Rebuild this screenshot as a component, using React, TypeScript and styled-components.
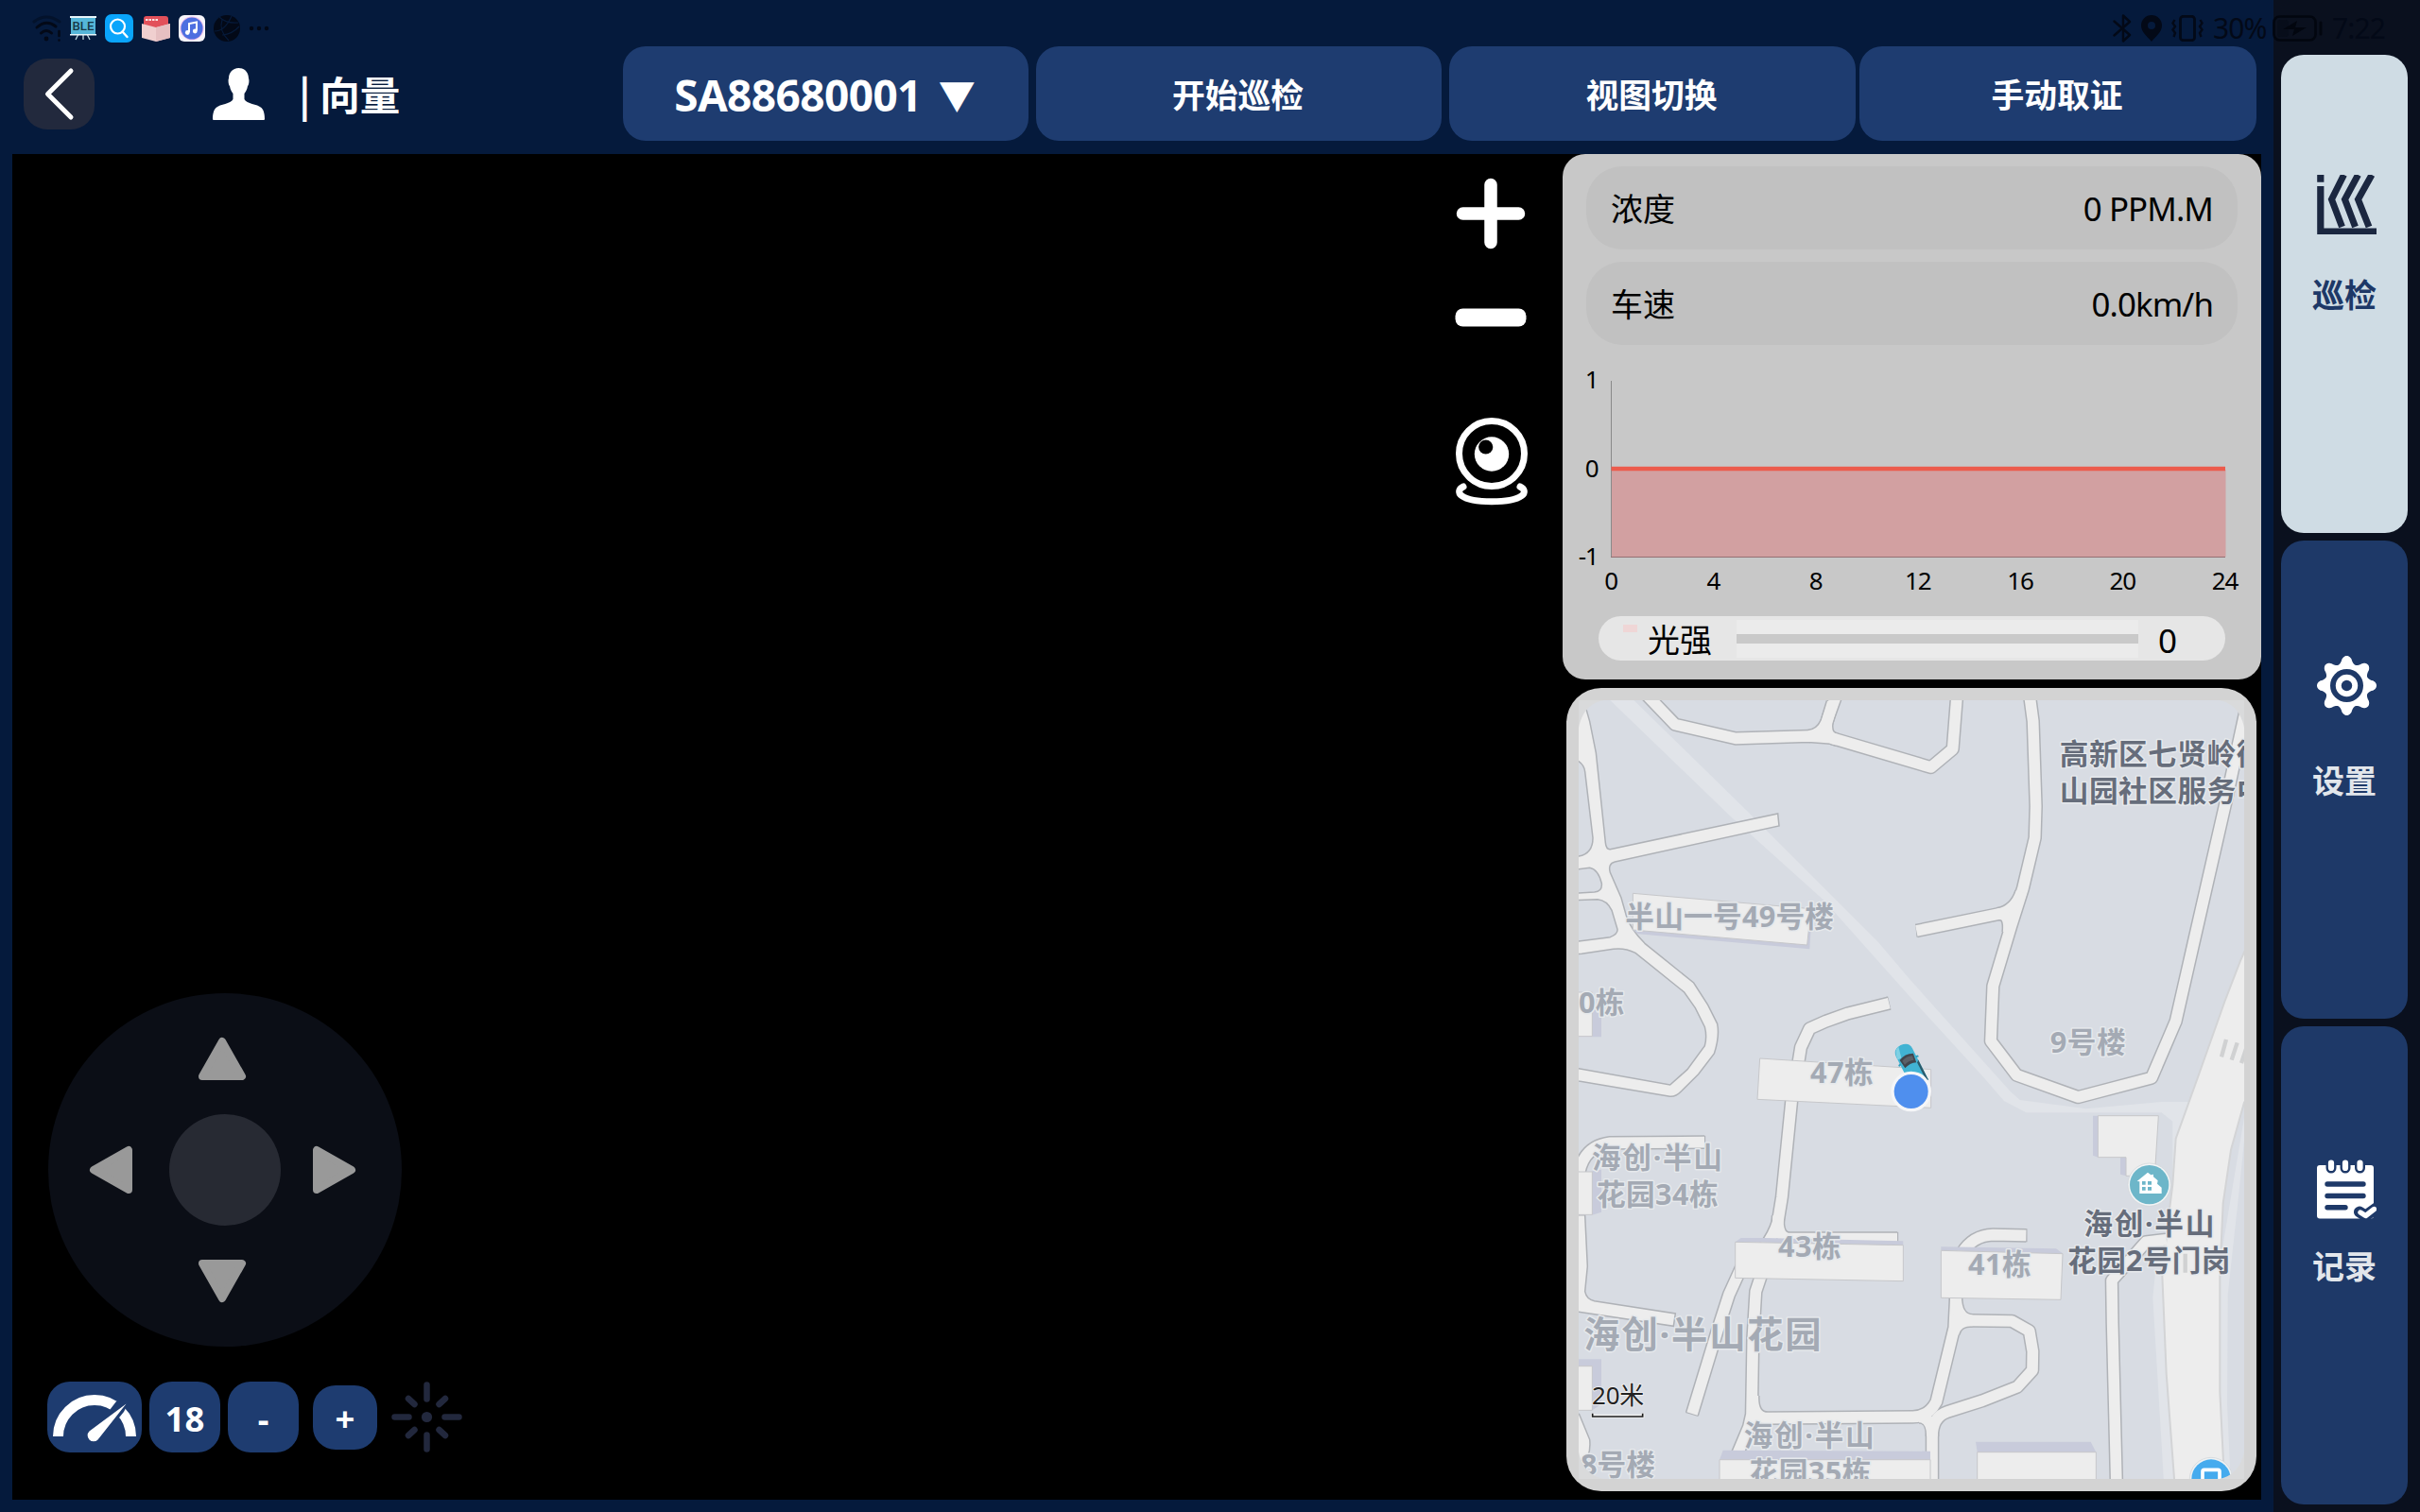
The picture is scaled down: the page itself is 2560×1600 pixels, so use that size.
import React from 'react';
import styled, { createGlobalStyle } from 'styled-components';

const sans = `"Noto Sans", "Noto Sans CJK SC", sans-serif`;
const cjk = `"Noto Sans CJK SC", "Noto Sans", sans-serif`;

const GlobalStyle = createGlobalStyle`
  * { box-sizing: border-box; }
  body { margin: 0; background: #051a3c; font-family: ${sans}; overflow: hidden; }
  button { font: inherit; border: 0; padding: 0; margin: 0; }
  svg { display: block; flex: none; }
`;

/* ---------- shell ---------- */

const Screen = styled.div`
  position: relative;
  display: flex;
  width: 2560px;
  height: 1600px;
  background: #051a3c;
`;

const Main = styled.main`
  display: flex;
  flex-direction: column;
  width: 2405px;
  padding: 0 13px 13px;
`;

const Header = styled.header`
  display: flex;
  align-items: center;
  height: 163px;
  padding: 49px 5px 14px 12px;
`;

const BackButton = styled.button`
  display: grid;
  place-items: center;
  width: 75px;
  height: 75px;
  border-radius: 25px;
  background: #22293d;
`;

const User = styled.div`
  display: flex;
  align-items: center;
  gap: 36px;
  margin-left: 125px;
  color: #fff;
`;

const UserName = styled.span`
  font: 700 42.5px/60px ${cjk};
  white-space: pre;
`;

const Actions = styled.nav`
  display: flex;
  margin-left: auto;
`;

const ActionButton = styled.button<{ $w: number; $gap?: number }>`
  display: flex;
  align-items: center;
  justify-content: center;
  width: ${(p) => p.$w}px;
  height: 100px;
  margin-left: ${(p) => p.$gap ?? 0}px;
  padding: 0 2px 1px 0;
  border-radius: 24px;
  background: #1e3c70;
  color: #fff;
  font: 700 34.8px/50px ${cjk};
`;

const DeviceId = styled.span`
  padding-top: 2px;
  font: 700 46px/60px ${sans};
  letter-spacing: -0.6px;
`;

const Caret = styled.span`
  margin-left: 18px;
  font: 400 39px/60px ${cjk};
`;

/* ---------- status bar ---------- */

const StatusBar = styled.div`
  position: absolute;
  top: 0;
  left: 0;
  display: flex;
  align-items: center;
  justify-content: space-between;
  width: 2560px;
  height: 60px;
  padding: 0 36px 0 34px;
  color: #030917;
`;

const StatusGroup = styled.div<{ $gap: number }>`
  display: flex;
  align-items: center;
  gap: ${(p) => p.$gap}px;
`;

const StatusText = styled.span<{ $w: number }>`
  width: ${(p) => p.$w}px;
  font: 400 30px/40px ${sans};
  letter-spacing: -0.9px;
  white-space: nowrap;
`;

/* ---------- workspace ---------- */

const Workspace = styled.section`
  display: flex;
  flex: 1;
  background: #000;
`;

const Video = styled.div`
  display: flex;
  flex: 1;
  justify-content: space-between;
`;

const DriveControls = styled.div`
  display: flex;
  flex-direction: column;
  justify-content: flex-end;
  padding: 0 0 50px 37px;
`;

const DriveRow = styled.div`
  display: flex;
  align-items: center;
  height: 75px;
  margin-top: 37px;
`;

const DriveButton = styled.button<{ $w?: number; $h?: number; $ml?: number }>`
  display: grid;
  place-items: center;
  width: ${(p) => p.$w ?? 75}px;
  height: ${(p) => p.$h ?? 75}px;
  margin-left: ${(p) => p.$ml ?? 0}px;
  padding-top: 2px;
  border-radius: 24px;
  background: #1e3c70;
  color: #fff;
  font: 700 36.5px/50px ${sans};
`;

const LightButton = styled.button`
  width: 75px;
  height: 75px;
  margin-left: 15px;
  background: transparent;
`;

const CameraControls = styled.div`
  display: flex;
  flex-direction: column;
  align-items: center;
  width: 150px;
  padding-top: 25px;
`;

const CameraButton = styled.button<{ $mt?: number }>`
  display: grid;
  place-items: center;
  width: 78px;
  margin-top: ${(p) => p.$mt ?? 0}px;
  background: transparent;
`;

const Panels = styled.aside`
  display: flex;
  flex-direction: column;
  width: 739px;
`;

const DataPanel = styled.div`
  display: flex;
  flex-direction: column;
  height: 556px;
  padding: 13px 25px 20px;
  border-radius: 24px;
  background: #c8c8c8;
`;

const Reading = styled.div`
  display: flex;
  align-items: center;
  justify-content: space-between;
  height: 88px;
  margin-bottom: 13px;
  padding: 0 26px 0 26px;
  border-radius: 38px;
  background: #c1c1c1;
  color: #000;
  font: 400 34px/50px ${cjk};
`;

const ReadingValue = styled.span`
  padding-top: 1px;
  font: 400 34.8px/50px ${sans};
  letter-spacing: -0.9px;
`;

const ChartBox = styled.div`
  height: 274px;
  margin: 0 -25px;
`;

const ChartText = styled.text`
  font: 400 26px ${sans};
  letter-spacing: -1.2px;
  fill: #000;
`;

const LightRow = styled.div`
  display: flex;
  align-items: center;
  width: 663px;
  height: 47px;
  margin-left: 13px;
  padding-left: 26px;
  border-radius: 23.5px;
  background: #e6e6e6;
  color: #000;
  font: 400 34px/47px ${cjk};
`;

const Swatch = styled.i`
  align-self: flex-start;
  width: 15px;
  height: 8px;
  margin: 9px 11px 0 0;
  background: #efd6d6;
`;

const Track = styled.div`
  display: flex;
  align-items: center;
  width: 425px;
  height: 40px;
  margin: 0 21px 0 26px;
  background: #ebebeb;

  &::before {
    content: '';
    width: 100%;
    height: 10px;
    background: #c9c9c9;
  }
`;

const LightValue = styled.span`
  padding-top: 3px;
  font: 400 35px/47px ${sans};
`;

const MapPanel = styled.div`
  width: 730px;
  height: 850px;
  margin: 9px 0 0 4px;
  padding: 13px;
  border-radius: 37px;
  background: #d3d3d3;
`;

/* ---------- side navigation ---------- */

const Side = styled.nav`
  display: flex;
  flex-direction: column;
  gap: 8px;
  width: 155px;
  padding: 58px 13px 8px 8px;
  background: #0a101e;
`;

const SideItem = styled.button<{ $active?: boolean }>`
  display: flex;
  flex-direction: column;
  align-items: center;
  justify-content: flex-start;
  height: 506px;
  border-radius: 24px;
  background: ${(p) => (p.$active ? '#cfdce4' : '#1e3968')};
  color: ${(p) => (p.$active ? '#1d3867' : '#e2e6eb')};
`;

const SideIcon = styled.span<{ $top: number }>`
  height: 228px;
  padding: ${(p) => p.$top}px 0 0 5px;
`;

const SideLabel = styled.span`
  font: 700 34px/50px ${cjk};
`;

/* ---------- icons ---------- */

const ink = '#030917';

const WifiIcon = () => (
  <svg width="31" height="28" viewBox="0 0 31 28" fill="none" stroke={ink} strokeLinecap="round" strokeWidth="3">
    <path d="M2 7Q15 -3 29 7" opacity=".45" />
    <path d="M5 13Q15 4 25 12" />
    <path d="M9.500 19Q15 14 20.500 19" />
    <circle cx="15" cy="25" r="2.400" fill={ink} stroke="none" />
    <path d="M28.500 17V22M28.500 26.500V26.600" strokeWidth="2.600" />
  </svg>
);

const BleBoard = styled.text`
  font: 500 12.5px Roboto, ${sans};
  fill: #173846;
`;

const BoardIcon = () => (
  <svg width="28" height="28" viewBox="0 0 28 28">
    <path d="M9 20L6 26M14 20V26M18 20L21 26" stroke="#bfd9e2" strokeWidth="1.300" />
    <rect x="1" y="1" width="26" height="20" fill="#55b6d8" />
    <path d="M0 1H28V3H0ZM0 20H28V21.500H0Z" fill="#e8f5fa" />
    <BleBoard x="2.500" y="15.500" textLength="23" lengthAdjust="spacingAndGlyphs">BLE</BleBoard>
  </svg>
);

const SearchAppIcon = () => (
  <svg width="30" height="30" viewBox="0 0 30 30" fill="none">
    <rect width="30" height="30" rx="7" fill="#0aa5fb" />
    <circle cx="13.500" cy="13" r="7.500" stroke="#fff" strokeWidth="2.200" />
    <path d="M18.500 18.500L23.500 24" stroke="#fff" strokeWidth="2.400" strokeLinecap="round" />
  </svg>
);

const ParcelIcon = () => (
  <svg width="30" height="27" viewBox="0 0 30 27">
    <path d="M2 3Q2 0 5 0H25Q28 0 28 3V12H2Z" fill="#e2505a" />
    <path d="M0 8L15 12L30 8V23L15 27L0 23Z" fill="#f0cfcf" />
    <path d="M15 12L30 8V23L15 27Z" fill="#e6bfc1" />
    <path d="M4 4H17" stroke="#fbe3e3" strokeWidth="2" strokeDasharray="2.500 1" />
  </svg>
);

const MusicIcon = () => (
  <svg width="28" height="28" viewBox="0 0 28 28">
    <rect width="28" height="28" rx="6" fill="#f7f5fb" />
    <circle cx="14" cy="14" r="12.500" fill="#e9b9ea" />
    <circle cx="14" cy="14" r="11.500" fill="#4d6fe0" />
    <path d="M11 18V9L19 7.500V16.500" fill="none" stroke="#fff" strokeWidth="2" />
    <circle cx="9.300" cy="18.500" r="2.400" fill="#fff" />
    <circle cx="17.300" cy="17" r="2.400" fill="#fff" />
  </svg>
);

const BallIcon = () => (
  <svg width="28" height="28" viewBox="0 0 28 28">
    <circle cx="14" cy="14" r="14" fill={ink} />
    <path d="M6 2Q13 9 26 8M9 5Q5 16 16 27M1 17Q12 17 19 1M9 21Q20 20 27 12" fill="none" stroke="#061a3a" strokeWidth="1.200" />
  </svg>
);

const DotsIcon = () => (
  <svg width="22" height="6" viewBox="0 0 22 6" fill={ink}>
    <circle cx="3" cy="3" r="2.200" />
    <circle cx="11" cy="3" r="2.200" />
    <circle cx="19" cy="3" r="2.200" />
  </svg>
);

const BluetoothIcon = () => (
  <svg width="20" height="30" viewBox="0 0 20 30" fill="none" stroke={ink} strokeWidth="2.400" strokeLinejoin="round" strokeLinecap="round">
    <path d="M1.500 7.500L18 22L11 28.500V1.500L18 8L1.500 22.500" />
  </svg>
);

const PinIcon = () => (
  <svg width="22" height="28" viewBox="0 0 22 28">
    <path fillRule="evenodd" d="M11 0A11 11 0 0 1 22 11C22 18 15 23 11 28C7 23 0 18 0 11A11 11 0 0 1 11 0ZM11 7A4 4 0 1 0 11 15A4 4 0 1 0 11 7Z" fill={ink} />
  </svg>
);

const VibrateIcon = () => (
  <svg width="34" height="28" viewBox="0 0 34 28" fill="none" stroke={ink} strokeWidth="2.800">
    <rect x="9.500" y="1.300" width="15" height="25.400" rx="3" />
    <path d="M3.500 5L1.500 8.500L4 12L1.500 15.500L4 19L2.500 23M30.500 5L32.500 8.500L30 12L32.500 15.500L30 19L31.500 23" strokeWidth="2.400" />
  </svg>
);

const BatteryIcon = () => (
  <svg width="53" height="28" viewBox="0 0 53 28" fill="none" stroke="#02060f">
    <rect x="1.500" y="1.500" width="44" height="25" rx="6" strokeWidth="2.600" />
    <rect x="5" y="5" width="12" height="18" rx="3" fill="#070d1a" stroke="none" />
    <path d="M26 6L11 15H23L21 22L36 13H24Z" fill="#02060f" stroke="none" />
    <path d="M51 8V20" strokeWidth="3" strokeLinecap="round" />
  </svg>
);

const BackIcon = () => (
  <svg width="75" height="75" viewBox="0 0 75 75" fill="none" stroke="#fff" strokeWidth="5" strokeLinecap="round" strokeLinejoin="round">
    <path d="M50 13L25.500 37.500L50 62" />
  </svg>
);

const PersonIcon = () => (
  <svg width="55" height="55" viewBox="0 0 55 55" fill="#fff">
    <path d="M27.500 0C34 0 38 5 38 11C38.800 12 38.500 18 37 19C36.500 23 34.500 25.500 33.500 27V33C36 38 47 38 51.500 42C54.500 45 55 50 55 54Q55 55 54 55H1Q0 55 0 54C0 50 .5 45 3.500 42C8 38 19 38 21.500 33V27C20.500 25.500 18.500 23 18 19C16.500 18 16.200 12 17 11C17 5 21 0 27.500 0Z" />
  </svg>
);

const Joystick = () => (
  <svg width="375" height="374" viewBox="50 1051 375 374">
    <circle cx="238" cy="1238" r="187" fill="#0b0e16" />
    <circle cx="238" cy="1238" r="59" fill="#272a33" />
    <g fill="#999" stroke="#999" strokeWidth="8" strokeLinejoin="round">
      <path d="M235 1102L256 1139H214Z" />
      <path d="M235 1374L256 1337H214Z" />
      <path d="M99 1238L136 1217V1259Z" />
      <path d="M372 1238L335 1217V1259Z" />
    </g>
  </svg>
);

const GaugeIcon = () => (
  <svg width="88" height="52" viewBox="56 1473 88 52">
    <path d="M61.500 1518A38.500 38.500 0 0 1 138.500 1518" fill="none" stroke="#fff" strokeWidth="11" />
    <path d="M96 1516L123 1481L137 1480L131 1492L105 1524Z" fill="#1e3c70" />
    <path d="M94.500 1512.500L133.500 1483.500L103.500 1521.500A6.300 6.300 0 1 1 94.500 1512.500Z" fill="#fff" />
  </svg>
);

const LampIcon = () => (
  <svg width="75" height="75" viewBox="0 0 75 75" fill="none" stroke="#22283d" strokeWidth="6.500" strokeLinecap="round">
    <circle cx="37.500" cy="37.500" r="5.600" fill="#22283d" stroke="none" />
    <path d="M37.500 3.500V18.500M37.500 56.500V71.500M3.500 37.500H18.500M56.500 37.500H71.500M18 18L24.500 24M57 18L50.500 24M18 57L24.500 51M57 57L50.500 51" />
  </svg>
);

const PlusIcon = () => (
  <svg width="78" height="76" viewBox="0 0 78 76" stroke="#fff" strokeWidth="13.500" strokeLinecap="round">
    <path d="M38 7.500V68.500M8.500 38H67.500" />
  </svg>
);

const MinusIcon = () => (
  <svg width="78" height="20" viewBox="0 0 78 20">
    <rect x=".5" y=".5" width="75" height="19" rx="8" fill="#fff" />
  </svg>
);

const WebcamIcon = () => (
  <svg width="78" height="94" viewBox="1539 441 78 94" fill="none" stroke="#fff">
    <circle cx="1578" cy="480" r="34.500" strokeWidth="7" />
    <circle cx="1578" cy="480.500" r="18.200" fill="#fff" stroke="none" />
    <circle cx="1571.700" cy="473" r="7.600" fill="#000" stroke="none" />
    <path d="M1548 515C1538 520 1544 530.800 1578 530.800S1618 520 1608 515" strokeWidth="7" strokeLinecap="round" />
  </svg>
);

const InspectIcon = () => (
  <svg width="63" height="63" viewBox="0 0 63 63" fill="none" stroke="#1b2740" strokeWidth="7">
    <path d="M3.800 0V7.700M3.800 12V60H63" strokeWidth="7.200" />
    <path d="M28.500 0L15.500 26L26.500 55M43.500 0L29.500 26L40.500 55M58 0L43.500 26L55 55" />
  </svg>
);

/* Eight round-tipped teeth: the radius follows a flattened cosine. */
const gearOutline = Array.from({ length: 240 }, (_, i) => {
  const t = (i / 240) * Math.PI * 2;
  const c = Math.cos(8 * t);
  const r = 27.500 + 4 * Math.sign(c) * Math.pow(Math.abs(c), 0.75);
  return `${(31.500 + r * Math.cos(t)).toFixed(2)},${(31.500 + r * Math.sin(t)).toFixed(2)}`;
}).join(' ');

const GearIcon = () => (
  <svg width="63" height="63" viewBox="0 0 63 63" fill="#fff">
    <polygon points={gearOutline} />
    <circle cx="31.500" cy="31.500" r="17.500" fill="#1e3968" />
    <circle cx="31.500" cy="31.500" r="11.700" />
    <circle cx="31.500" cy="31.500" r="5.700" fill="#1e3968" />
  </svg>
);

const RecordIcon = () => (
  <svg width="63" height="63" viewBox="0 0 63 63" fill="none" strokeLinecap="round" strokeLinejoin="round">
    <rect y="6" width="60" height="56.500" rx="3" fill="#fff" />
    <g stroke="#1e3968" strokeWidth="11">
      <path d="M15 4V9M30 4V9M45.500 4V9" />
    </g>
    <g stroke="#fff" strokeWidth="6.200">
      <path d="M15 3.500V9M30 3.500V9M45.500 3.500V9" />
    </g>
    <path d="M11 26H49M11 38.500H49M11 50.800H30" stroke="#1e3968" strokeWidth="5.400" />
    <path d="M45 55.500L51.500 59.500L64 50.500" stroke="#1e3968" strokeWidth="12" />
    <path d="M46 56L51.500 59.500L60.500 52.500" stroke="#fff" strokeWidth="5.400" />
  </svg>
);

/* ---------- chart ---------- */

const hours = [0, 4, 8, 12, 16, 20, 24];
const levels = [
  { v: '1', y: 402 },
  { v: '0', y: 496 },
  { v: '-1', y: 589 },
];

const Chart = () => (
  <svg width="739" height="262" viewBox="1653 378 739 262">
    <rect x="1705" y="497" width="649.500" height="92" fill="#d2a0a1" />
    <path d="M1704.500 403V589.500" stroke="#8a8a8a" />
    <path d="M1704 589.500H2354" stroke="#946f72" strokeWidth="1.200" />
    <path d="M1704.500 496H2354" stroke="#ec5b4c" strokeWidth="4.400" />
    {levels.map((l) => (
      <ChartText key={l.v} x={1690.500} y={l.y + 9} textAnchor="end">{l.v}</ChartText>
    ))}
    {hours.map((h) => (
      <ChartText key={h} x={1704 + (h / 24) * 649.500} y={624} textAnchor="middle">{h}</ChartText>
    ))}
  </svg>
);

/* ---------- map ---------- */

const MapLabel = styled.text<{ $dark?: boolean; $size?: number }>`
  font: 700 ${(p) => p.$size ?? 92}px ${sans};
  fill: ${(p) => (p.$dark ? '#666d7b' : '#a4aab4')};
  stroke: #e6e9ec;
  stroke-width: 9px;
  stroke-linejoin: round;
  paint-order: stroke;
`;

const ScaleText = styled.text`
  font: 400 78px ${sans};
  fill: #222;
  stroke: #f2f2f2;
  stroke-width: 5px;
  paint-order: stroke;
`;

const labels: { t: string; x: number; y: number; w?: number; dark?: boolean; size?: number }[] = [
  { t: '半山一号49号楼', x: 208, y: 783, w: 662 },
  { t: '0栋', x: 60, y: 1055, w: 145 },
  { t: '47栋', x: 795, y: 1278, w: 200 },
  { t: '9号楼', x: 1556, y: 1183, w: 240 },
  { t: '高新区七贤岭街', x: 1586, y: 268, w: 654, dark: true },
  { t: '山园社区服务中', x: 1586, y: 384, w: 654, dark: true },
  { t: '海创·半山', x: 102, y: 1548, w: 414 },
  { t: '花园34栋', x: 117, y: 1665, w: 386 },
  { t: '43栋', x: 693, y: 1829, w: 200 },
  { t: '41栋', x: 1296, y: 1888, w: 200 },
  { t: '海创·半山花园', x: 76, y: 2119, w: 754, size: 115 },
  { t: '8号楼', x: 66, y: 2523, w: 237 },
  { t: '海创·半山', x: 584, y: 2431, w: 414 },
  { t: '花园35栋', x: 602, y: 2548, w: 386 },
  { t: '海创·半山', x: 1663, y: 1758, w: 414, dark: true },
  { t: '花园2号门岗', x: 1612, y: 1875, w: 516, dark: true },
];

const roads = [
  'M270 40L366 140L558 184L790 177L860 182L1178 276L1247 218L1261 40',
  'M880 40L853 115Q838 172 790 177',
  'M866 70L848 130Q840 182 880 188',
  'M1490 40L1502 130L1511 400L1508 500L1470 660L1432 780L1375 970L1368 1145L1450 1253L1645 1323L1878 1262L1955 1082L2010 840L2115 380L2180 80',
  'M1132 795L1390 742Q1445 732 1465 672',
  'M1390 742Q1430 736 1424 800',
  'M1045 1025L915 1057L845 1082L793 1105L765 1165L757 1215',
  'M737 1320L705 1640L692 1720Q680 1760 650 1800',
  'M693 1700Q688 1772 730 1772L1071 1772',
  'M578 1860L537 1950L500 2065L420 2328',
  'M642 1880L622 1940L613 2090L609 2330L600 2370L560 2465',
  'M613 2270Q610 2340 660 2342L1120 2338Q1170 2338 1195 2290L1252 2055L1257 1955',
  'M1140 2338Q1182 2338 1182 2400L1182 2560',
  'M1257 1955Q1258 2031 1310 2032L1435 2034L1490 2065L1501 2130L1500 2190L1452 2243L1340 2287L1230 2322Q1182 2338 1182 2400',
  'M1249 2075Q1256 2032 1310 2032',
  'M1480 1762L1375 1760Q1310 1762 1275 1820',
  'M1925 1775L1860 1783L1752 1905L1754 2040L1767 2560',
  'M459 1466L160 1468Q80 1478 62 1560',
];

const roadAreas = [
  'M40 50L75 60L95 130L115 230L145 515Q147 537 160 536L692 423L696 462L175 576Q152 582 160 610L195 690L212 750Q225 790 270 835L425 960L470 1030L500 1090Q508 1130 490 1185L440 1250L385 1305Q365 1325 345 1320L60 1272L40 1268L40 1228L60 1232L350 1284L405 1235L460 1160Q468 1130 460 1100L430 1040L395 990L240 865Q205 848 170 853L70 868L40 870L40 830L60 828L160 815Q185 805 183 790L165 730Q150 698 120 695L40 698L40 676L110 672Q135 670 133 645Q122 600 95 595L40 602L40 562L60 558Q105 550 105 500L80 290Q78 270 60 257L40 250Z',
  'M40 1697L80 1697L88 1860L80 1940Q85 1965 110 1970L367 2010L361 2050L60 2005L40 2003Z',
  'M40 2316L62 2330L95 2410Q98 2440 90 2460L40 2500Z',
];

const shadows = [
  'M232 792L248 805L793 853L800 735Z',
  'M103 1045L132 1050V1132H103Z',
  'M103 1557L132 1553V1688L103 1697Z',
  'M60 2155H132V2298L103 2317V2177H60Z',
  'M557 1783L575 1770H650L1090 1780V1793Z',
  'M1210 1810V1798L1575 1804L1598 1820Z',
  'M1692 1382H1708V1514L1692 1508Z',
  'M1779 1514H1797V1573L1779 1568Z',
  'M507 2474L518 2444L1176 2447V2474Z',
  'M1325 2450L1320 2417H1685L1702 2450Z',
];

const buildings = [
  'M232 676L797 725L785 840L232 792Z',
  'M50 990H103V1130H50Z',
  'M635 1200L1178 1235V1357L627 1330Z',
  'M50 1560H103V1696H50Z',
  'M50 2177H103V2317H50Z',
  'M557 1783L1090 1793V1907L557 1897Z',
  'M1210 1810L1596 1820L1590 1966L1210 1960Z',
  'M1708 1382H1900L1888 1573H1797V1514H1708Z',
  'M507 2474H1176V2560H507Z',
  'M1325 2450H1702V2560H1325Z',
];

const MapView = () => (
  <svg width="704" height="824" viewBox="60 63 2112 2472">
    <rect x="60" y="63" width="2112" height="2472" fill="#d8dce3" />
    <g fill="#e1e4e9">
      <path d="M160 63H235L600 420L860 680L1010 830L1110 948L1430 1305L1460 1332L1670 1360L1910 1338H2000V1400L1945 1660V1400L1910 1372H1480L1410 1335L1345 1260L1110 1003L840 700L540 430Z" />
      <path d="M1890 1880L1882 1960L1900 2260L1918 2560H1960L1920 1880Z" />
      <path d="M2180 1340V1380L2155 1630L2120 1950L2118 2300L2130 2560H2090V1880Z" />
    </g>
    <g fill="none" stroke="#afb2b7" strokeWidth="44" strokeLinejoin="round">
      {roads.map((d) => <path key={d} d={d} />)}
    </g>
    <g fill="#ededed" stroke="#afb2b7" strokeWidth="4.500">
      {roadAreas.map((d) => <path key={d} d={d} />)}
      <path d="M1038 1004L1048 1046M1132 774L1136 815M1480 1741V1783M459 1445V1487M1071 1751V1793M400 2322L440 2334" strokeWidth="7" />
    </g>
    <path d="M2200 800L2160 890L2110 1020L2025 1260L1955 1455L1945 1600L1935 1680L1912 1890L1925 2200L1952 2560H2110L2095 2260V1880L2105 1660L2130 1490L2172 1340L2200 1300Z" fill="#ededed" stroke="#d3d4d6" strokeWidth="6" />
    <g fill="none" stroke="#ededed" strokeWidth="35" strokeLinejoin="round">
      {roads.map((d) => <path key={d} d={d} />)}
    </g>
    <path d="M2115 1140L2100 1195M2150 1150L2132 1205M2182 1158L2163 1215M1985 1820V1880" stroke="#d0d1d2" strokeWidth="13" />
    <g fill="#c8cbdb">
      {shadows.map((d) => <path key={d} d={d} />)}
    </g>
    <g fill="#ededed" stroke="#c6c7ca" strokeWidth="3">
      {buildings.map((d) => <path key={d} d={d} />)}
    </g>

    {labels.map((l) => (
      <MapLabel key={`${l.t}${l.x}`} x={l.x} y={l.y} textLength={l.w} $dark={l.dark} $size={l.size}>{l.t}</MapLabel>
    ))}

    <circle cx="1871" cy="1601" r="68" fill="#f2f4f5" stroke="#cfd3d6" strokeWidth="2" />
    <circle cx="1871" cy="1601" r="62" fill="#6db6c9" />
    <path d="M1832 1590L1866 1562L1876 1570L1884 1568V1576L1898 1588L1896 1598L1910 1610V1629H1840V1591Z" fill="#fff" />
    <path d="M1848 1590H1859V1601H1848ZM1866 1590H1878V1601H1866ZM1848 1608H1859V1619H1848ZM1866 1608H1878V1619H1866Z" fill="#6db6c9" />

    <circle cx="2067" cy="2535" r="68" fill="#eef1f3" stroke="#cfd3d6" strokeWidth="2" />
    <circle cx="2067" cy="2535" r="62" fill="#45abee" />
    <rect x="2040" y="2506" width="54" height="60" rx="5" fill="none" stroke="#fff" strokeWidth="11" />

    <g transform="translate(1112 1218) rotate(-27)">
      <path d="M-29 -42Q-28 -66 0 -67Q28 -66 29 -42V70H-29Z" fill="#41b3d3" />
      <path d="M-29 -30Q-28 -62 -8 -66L-16 -30Z" fill="#7fd0e4" />
      <path d="M-24 -26Q0 -38 24 -26L20 4Q0 -4 -20 4Z" fill="#41454d" />
      <path d="M-18 -20Q0 -28 18 -20L16 -6Q0 -12 -16 -6Z" fill="#5b6068" />
      <path d="M-35 -14L-27 -16V-10L-35 -8ZM35 -14L27 -16V-10L35 -8Z" fill="#2c9dbd" />
      <path d="M22 6L29 0V70H22Z" fill="#2a5a6a" />
    </g>
    <circle cx="1115" cy="1305" r="64" fill="#f5f6f8" />
    <circle cx="1115" cy="1305" r="54" fill="#4f8fee" />

    <ScaleText x="102" y="2299" textLength="166">20米</ScaleText>
    <path d="M104 2327V2336H263V2327" fill="none" stroke="#f2f2f2" strokeWidth="11" />
    <path d="M104 2327V2337H263V2327" fill="none" stroke="#1c1c1c" strokeWidth="5" />
    <path d="M60 63H140Q75 75 60 150ZM2172 63H2092Q2157 75 2172 150ZM60 2535V2450Q75 2522 140 2535ZM2172 2535V2450Q2157 2522 2092 2535Z" fill="#d9dadb" />
  </svg>
);

/* ---------- page ---------- */

export default function App() {
  return (
    <Screen>
      <GlobalStyle />
      <Main>
        <Header>
          <BackButton><BackIcon /></BackButton>
          <User>
            <PersonIcon />
            <UserName>| 向量</UserName>
          </User>
          <Actions>
            <ActionButton $w={429}>
              <DeviceId>SA88680001</DeviceId>
              <Caret>▼</Caret>
            </ActionButton>
            <ActionButton $w={429} $gap={8}>开始巡检</ActionButton>
            <ActionButton $w={430} $gap={8}>视图切换</ActionButton>
            <ActionButton $w={420} $gap={4}>手动取证</ActionButton>
          </Actions>
        </Header>

        <Workspace>
          <Video>
            <DriveControls>
              <Joystick />
              <DriveRow>
                <DriveButton $w={100}><GaugeIcon /></DriveButton>
                <DriveButton $ml={8}>18</DriveButton>
                <DriveButton $ml={8}>-</DriveButton>
                <DriveButton $ml={15} $w={68} $h={68}>+</DriveButton>
                <LightButton><LampIcon /></LightButton>
              </DriveRow>
            </DriveControls>
            <CameraControls>
              <CameraButton><PlusIcon /></CameraButton>
              <CameraButton $mt={62}><MinusIcon /></CameraButton>
              <CameraButton $mt={95}><WebcamIcon /></CameraButton>
            </CameraControls>
          </Video>

          <Panels>
            <DataPanel>
              <Reading>
                浓度<ReadingValue>0 PPM.M</ReadingValue>
              </Reading>
              <Reading>
                车速<ReadingValue>0.0km/h</ReadingValue>
              </Reading>
              <ChartBox><Chart /></ChartBox>
              <LightRow>
                <Swatch />
                光强
                <Track />
                <LightValue>0</LightValue>
              </LightRow>
            </DataPanel>
            <MapPanel><MapView /></MapPanel>
          </Panels>
        </Workspace>
      </Main>

      <Side>
        <SideItem $active>
          <SideIcon $top={127}><InspectIcon /></SideIcon>
          <SideLabel>巡检</SideLabel>
        </SideItem>
        <SideItem>
          <SideIcon $top={122}><GearIcon /></SideIcon>
          <SideLabel>设置</SideLabel>
        </SideItem>
        <SideItem>
          <SideIcon $top={141}><RecordIcon /></SideIcon>
          <SideLabel>记录</SideLabel>
        </SideItem>
      </Side>

      <StatusBar>
        <StatusGroup $gap={9}>
          <WifiIcon />
          <BoardIcon />
          <SearchAppIcon />
          <ParcelIcon />
          <MusicIcon />
          <BallIcon />
          <DotsIcon />
        </StatusGroup>
        <StatusGroup $gap={10}>
          <BluetoothIcon />
          <PinIcon />
          <VibrateIcon />
          <StatusText $w={53}>30%</StatusText>
          <BatteryIcon />
          <StatusText $w={57}>7:22</StatusText>
        </StatusGroup>
      </StatusBar>
    </Screen>
  );
}
